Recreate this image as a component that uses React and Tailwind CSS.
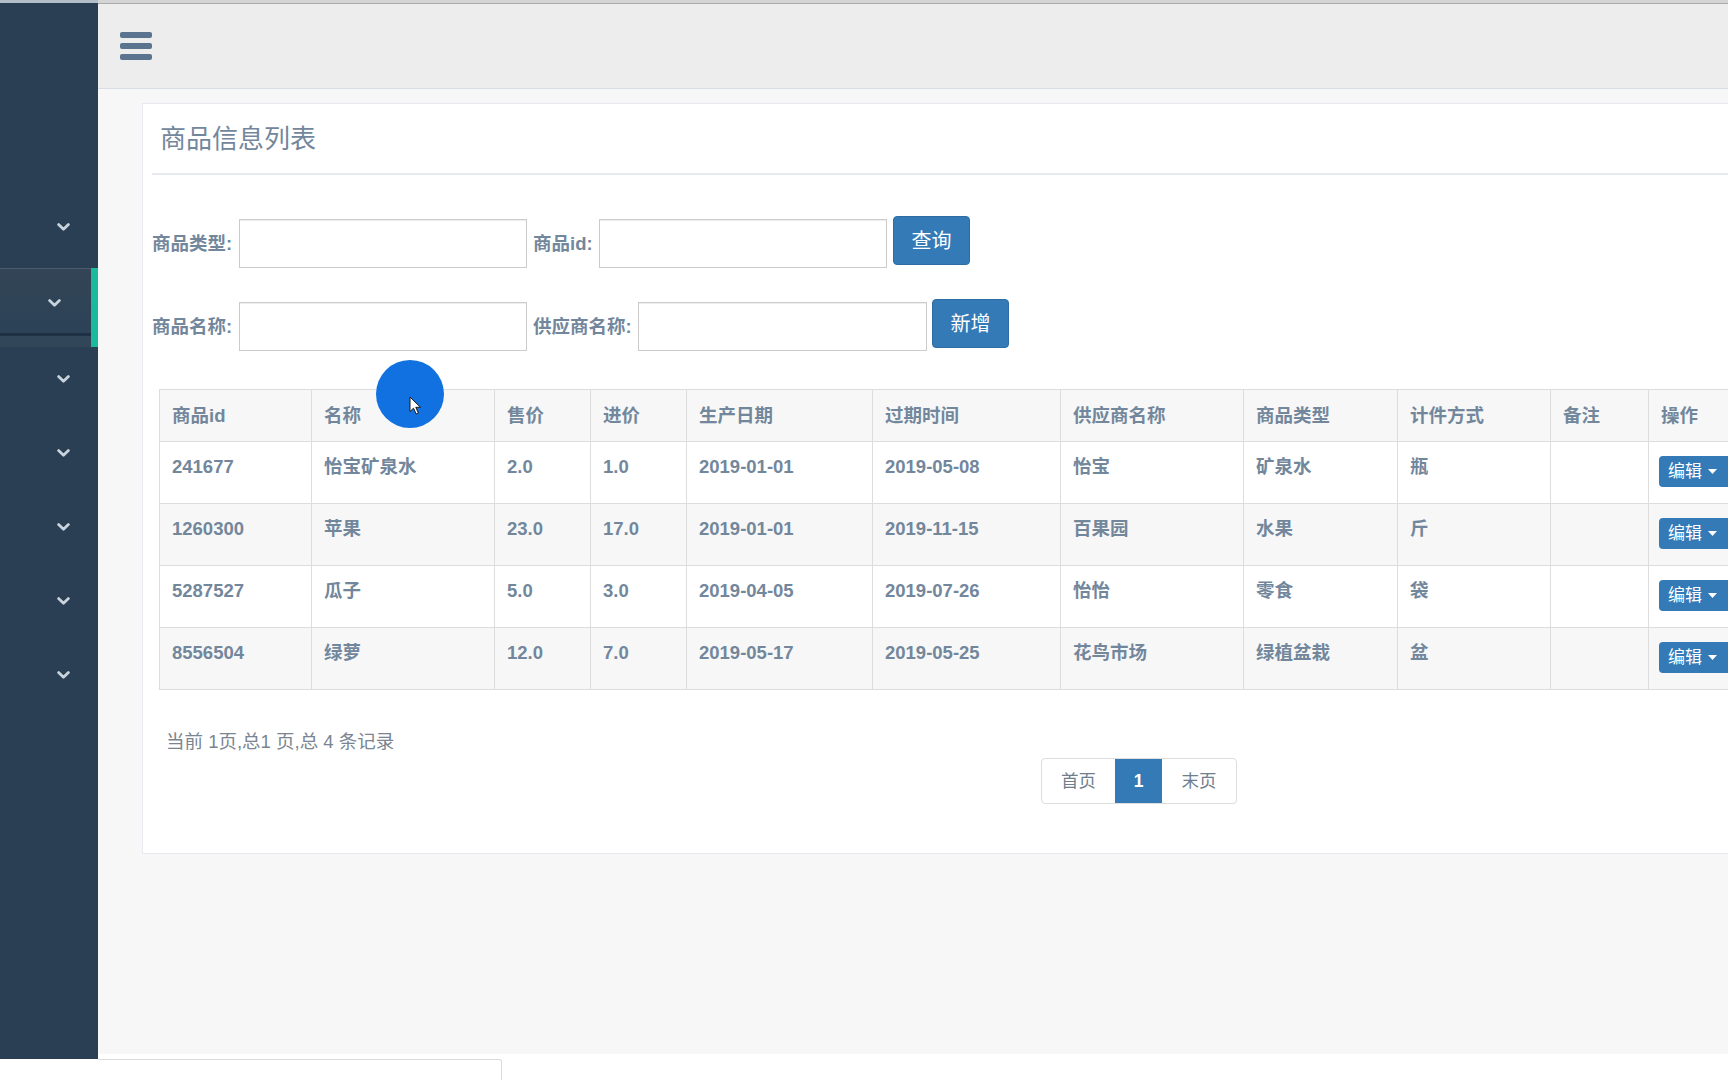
import React from "react";

const FONT = { fontFamily: '"Liberation Sans", "Noto Sans CJK SC", sans-serif' };

const Chevron = () => (
  <svg width="13" height="8" viewBox="0 0 13 8" className="block">
    <path d="M1.6 1.6 L6.5 6.2 L11.4 1.6" fill="none" stroke="#c9d3dd" strokeWidth="2.8" strokeLinecap="round" strokeLinejoin="round" />
  </svg>
);

const cols = [152, 183, 96, 96, 186, 188, 183, 154, 153, 98, 110];
const headers = ["商品id", "名称", "售价", "进价", "生产日期", "过期时间", "供应商名称", "商品类型", "计件方式", "备注", "操作"];
const rows = [
  ["241677", "怡宝矿泉水", "2.0", "1.0", "2019-01-01", "2019-05-08", "怡宝", "矿泉水", "瓶", ""],
  ["1260300", "苹果", "23.0", "17.0", "2019-01-01", "2019-11-15", "百果园", "水果", "斤", ""],
  ["5287527", "瓜子", "5.0", "3.0", "2019-04-05", "2019-07-26", "怡怡", "零食", "袋", ""],
  ["8556504", "绿萝", "12.0", "7.0", "2019-05-17", "2019-05-25", "花鸟市场", "绿植盆栽", "盆", ""],
];

function Sidebar() {
  const Item = () => (
    <div className="h-[74px] flex justify-end items-start pt-[28px] pr-[28px]">
      <Chevron />
    </div>
  );
  return (
    <div className="w-[98px] shrink-0 bg-[#2A3F54] flex flex-col">
      <div className="h-[193px]" />
      <div className="h-[72px] flex justify-end items-start pt-[27px] pr-[28px]">
        <Chevron />
      </div>
      <div className="flex flex-col border-r-[7px] border-[#1ABB9C]">
        <div className="h-[65px] flex justify-end items-start pt-[30px] pr-[30px] bg-gradient-to-b from-[#334556] to-[#2C4257] border-t border-[#4a5b6d]">
          <Chevron />
        </div>
        <div className="h-[3px] bg-[#1f3144]" />
        <div className="h-[11px] bg-[#32465a]" />
      </div>
      <Item />
      <Item />
      <Item />
      <Item />
      <Item />
    </div>
  );
}

function Header() {
  return (
    <div className="h-[86px] shrink-0 bg-[#EDEDED] border-t border-b border-t-[#ababab] border-b-[#D9DEE4] flex items-center pl-[22px]">
      <div className="flex flex-col gap-[5px] w-[32px]">
        <div className="h-[6px] rounded-[2px] bg-[#5A738E]" />
        <div className="h-[6px] rounded-[2px] bg-[#5A738E]" />
        <div className="h-[6px] rounded-[2px] bg-[#5A738E]" />
      </div>
    </div>
  );
}

function Field({ label, labelW, inputW }) {
  return (
    <>
      <div className={`mt-[3px] h-[49px] flex items-center whitespace-nowrap font-bold text-[18.5px] text-[#73879C] ${labelW}`}>
        {label}
      </div>
      <div className={`mt-[3px] h-[49px] border border-[#cccccc] bg-white shadow-[inset_0_1px_1px_rgba(0,0,0,0.075)] ${inputW}`} />
    </>
  );
}

function Btn({ children }) {
  return (
    <div className="h-[49px] w-[77px] flex items-center justify-center rounded-[4px] bg-[#337ab7] border border-[#2e6da4] text-white text-[20px]">
      {children}
    </div>
  );
}

function Table() {
  return (
    <table className="ml-[7px] table-fixed border-collapse w-[1599px] text-[#73879C] text-[18.5px] font-bold">
      <colgroup>
        {cols.map((w, i) => (
          <col key={i} style={{ width: w }} />
        ))}
      </colgroup>
      <thead>
        <tr className="h-[52px] bg-[#f7f7f7]">
          {headers.map((h) => (
            <th key={h} className="border border-[#dddddd] px-[12px] text-left align-middle font-bold whitespace-nowrap">
              {h}
            </th>
          ))}
        </tr>
      </thead>
      <tbody>
        {rows.map((r, ri) => (
          <tr key={ri} className={`h-[62px] ${ri % 2 === 1 ? "bg-[#f7f7f7]" : "bg-white"}`}>
            {r.map((c, ci) => (
              <td key={ci} className="border border-[#dddddd] px-[12px] pt-[13px] align-top leading-[24px] whitespace-nowrap">
                {c}
              </td>
            ))}
            <td className="border border-[#dddddd] pl-[10px] pt-[14px] align-top">
              <div className="h-[31px] w-[74px] rounded-[4px] bg-[#337ab7] flex items-center pl-[9px] gap-[6px] text-white text-[17px] font-normal">
                <span>编辑</span>
                <svg width="9" height="5" viewBox="0 0 9 5">
                  <path d="M0 0 L9 0 L4.5 5 Z" fill="#ffffff" />
                </svg>
              </div>
            </td>
          </tr>
        ))}
      </tbody>
    </table>
  );
}

function Card() {
  return (
    <div className="w-[1760px] bg-white border border-[#E6E9ED] px-[9px] pb-[49px]">
      <div className="pt-[20px] pb-[18px] border-b-2 border-[#E6E9ED] pl-[8px]">
        <div className="text-[26px] leading-[31px] text-[#73879C]">商品信息列表</div>
      </div>

      <div className="mt-[41px] flex items-start">
        <Field label="商品类型:" labelW="w-[87px]" inputW="w-[288px]" />
        <div className="w-[6px]" />
        <Field label="商品id:" labelW="w-[66px]" inputW="w-[288px]" />
        <div className="w-[6px]" />
        <Btn>查询</Btn>
      </div>
      <div className="mt-[31px] flex items-start">
        <Field label="商品名称:" labelW="w-[87px]" inputW="w-[288px]" />
        <div className="w-[6px]" />
        <Field label="供应商名称:" labelW="w-[105px]" inputW="w-[289px]" />
        <div className="w-[5px]" />
        <Btn>新增</Btn>
      </div>

      <div className="mt-[38px]">
        <Table />
      </div>

      <div className="mt-[39px] ml-[14px] text-[18.5px] leading-[26px] text-[#7a8591]">
        当前 1页,总1 页,总 4 条记录
      </div>
      <div className="mt-[3px] ml-[889px] flex h-[46px] w-[196px] border border-[#dddddd] rounded-[4px] overflow-hidden text-[17.5px] text-[#6f7f8e]">
        <div className="w-[73px] flex items-center justify-center">首页</div>
        <div className="w-[47px] flex items-center justify-center bg-[#337ab7] text-white font-bold">1</div>
        <div className="flex-1 flex items-center justify-center">末页</div>
      </div>
    </div>
  );
}

export default function App() {
  return (
    <div className="relative w-[1728px] h-[1080px] overflow-hidden flex flex-col bg-white" style={FONT}>
      <div className="h-[3px] flex shrink-0">
        <div className="w-[98px] bg-[#b3bec9]" />
        <div className="flex-1 bg-[#d4d4d4]" />
      </div>
      <div className="h-[1056px] flex shrink-0">
        <Sidebar />
        <div className="flex-1 flex flex-col overflow-hidden">
          <Header />
          <div className="flex-1 bg-[#F7F7F7] pt-[14px] pl-[44px] overflow-hidden">
            <Card />
          </div>
          <div className="h-[5px] bg-white shrink-0" />
        </div>
      </div>
      <div className="flex-1 bg-white">
        <div className="ml-[98px] w-[404px] h-full border-t border-r border-[#dcdcdc] rounded-tr-[3px]" />
      </div>

      <div className="absolute left-[376px] top-[360px] w-[68px] h-[68px] rounded-full bg-[#1171e0]" />
      <svg className="absolute left-[409px] top-[396px]" width="13" height="20" viewBox="0 0 13 20">
        <path d="M1 1 L1 15.5 L4.5 12.2 L7.2 18 L9.4 17 L6.8 11.3 L11.5 11.3 Z" fill="#ffffff" stroke="#1a1a1a" strokeWidth="1" strokeLinejoin="round" />
      </svg>
    </div>
  );
}
